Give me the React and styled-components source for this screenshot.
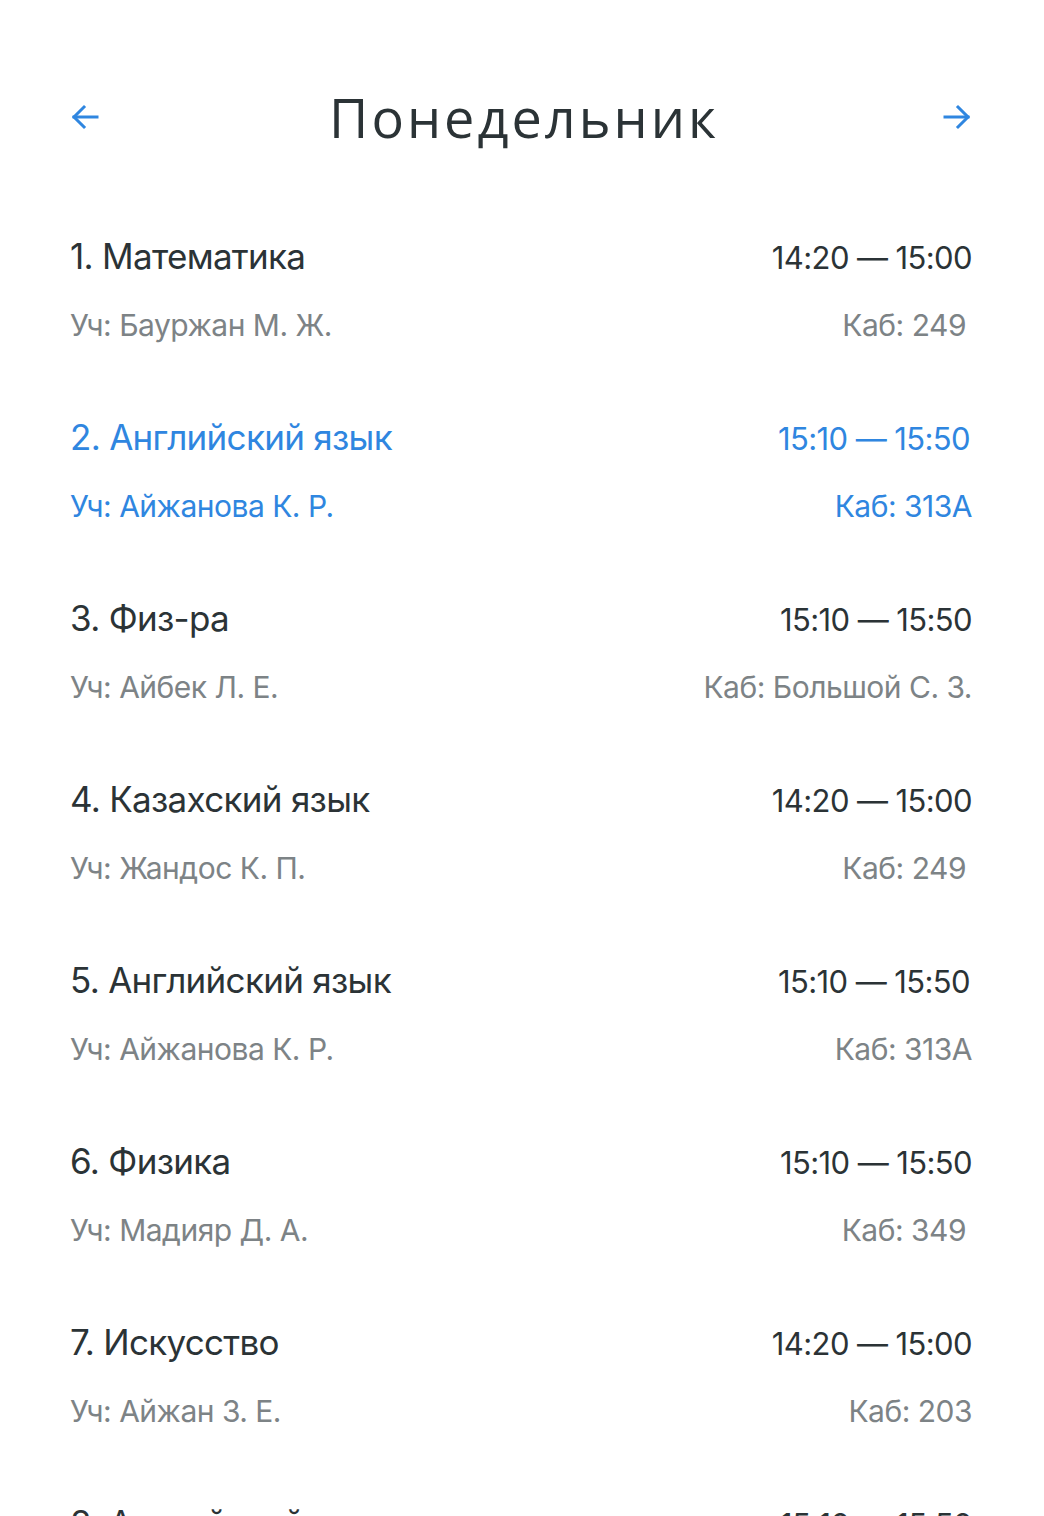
import React from 'react';
import styled, { createGlobalStyle } from 'styled-components';

const GlobalStyle = createGlobalStyle`
  body {
    margin: 0;
    background: #ffffff;
    font-family: Inter, "Noto Sans", sans-serif;
    -webkit-font-smoothing: antialiased;
  }
`;

const lessons = [
  { title: '1. Математика', time: '14:20 — 15:00', teacher: 'Уч: Бауржан М. Ж.', room: 'Каб: 249', inset: 6 },
  { title: '2. Английский язык', time: '15:10 — 15:50', teacher: 'Уч: Айжанова К. Р.', room: 'Каб: 313А', active: true, timeInset: 2 },
  { title: '3. Физ-ра', time: '15:10 — 15:50', teacher: 'Уч: Айбек Л. Е.', room: 'Каб: Большой С. З.' },
  { title: '4. Казахский язык', time: '14:20 — 15:00', teacher: 'Уч: Жандос К. П.', room: 'Каб: 249', inset: 6 },
  { title: '5. Английский язык', time: '15:10 — 15:50', teacher: 'Уч: Айжанова К. Р.', room: 'Каб: 313А', timeInset: 2 },
  { title: '6. Физика', time: '15:10 — 15:50', teacher: 'Уч: Мадияр Д. А.', room: 'Каб: 349', inset: 6 },
  { title: '7. Искусство', time: '14:20 — 15:00', teacher: 'Уч: Айжан З. Е.', room: 'Каб: 203' },
  { title: '8. Английский язык', time: '15:10 — 15:50', teacher: 'Уч: Айжанова К. Р.', room: 'Каб: 313А' },
];

const App = () => {
  return (
    <>
      <GlobalStyle />
      <Page>
        <Header>
          <NavButton aria-label="Назад">
            <svg width="30" height="30" viewBox="0 0 30 30" fill="none" stroke="currentColor" strokeWidth="3" strokeLinecap="square">
              <path d="M27 15H4" />
              <path d="M14 5L4 15L14 25" />
            </svg>
          </NavButton>
          <DayTitle>Понедельник</DayTitle>
          <NavButton aria-label="Вперёд">
            <svg width="30" height="30" viewBox="0 0 30 30" fill="none" stroke="currentColor" strokeWidth="3" strokeLinecap="square">
              <path d="M3 15H26" />
              <path d="M16 5L26 15L16 25" />
            </svg>
          </NavButton>
        </Header>

        <List>
          {lessons.map((item, idx) => (
            <Lesson key={idx} $active={item.active}>
              <Row>
                <Subject>{item.title}</Subject>
                <Time $inset={item.timeInset}>{item.time}</Time>
              </Row>
              <Row>
                <Meta>{item.teacher}</Meta>
                <Meta $inset={item.inset}>{item.room}</Meta>
              </Row>
            </Lesson>
          ))}
        </List>
      </Page>
    </>
  );
};

const Page = styled.div`
  height: 1516px;
  overflow: hidden;
  padding: 0 72px 0 70px;
  box-sizing: border-box;
`;

const Header = styled.header`
  display: flex;
  align-items: center;
  justify-content: space-between;
  padding-top: 90px;
  height: 54px;
`;

const NavButton = styled.button`
  border: 0;
  background: none;
  padding: 0;
  width: 30px;
  height: 30px;
  color: #2f86e0;
  display: flex;
  align-items: center;
  justify-content: center;
  cursor: pointer;
`;

const DayTitle = styled.h1`
  margin: 0 0 0 6px;
  font-family: "Open Sans", sans-serif;
  font-weight: 400;
  font-size: 54px;
  letter-spacing: 3px;
  color: #2b3336;
`;

const List = styled.div`
  display: flex;
  flex-direction: column;
  gap: 74px;
  margin-top: 92px;
`;

const Lesson = styled.div`
  display: flex;
  flex-direction: column;
  gap: 29px;
  color: ${(p) => (p.$active ? '#2f86e0' : '#2b3336')};
  --meta: ${(p) => (p.$active ? '#2f86e0' : '#7d8386')};
`;

const Row = styled.div`
  display: flex;
  justify-content: space-between;
  align-items: baseline;
`;

const Subject = styled.div`
  font-size: 35px;
  line-height: 40px;
  letter-spacing: -0.7px;
`;

const Time = styled.div`
  font-size: 31px;
  line-height: 40px;
  letter-spacing: -0.6px;
  margin-right: ${(p) => p.$inset || 0}px;
`;

const Meta = styled.div`
  font-size: 30px;
  line-height: 36px;
  letter-spacing: -0.5px;
  color: var(--meta);
  margin-right: ${(p) => p.$inset || 0}px;
`;

export default App;
